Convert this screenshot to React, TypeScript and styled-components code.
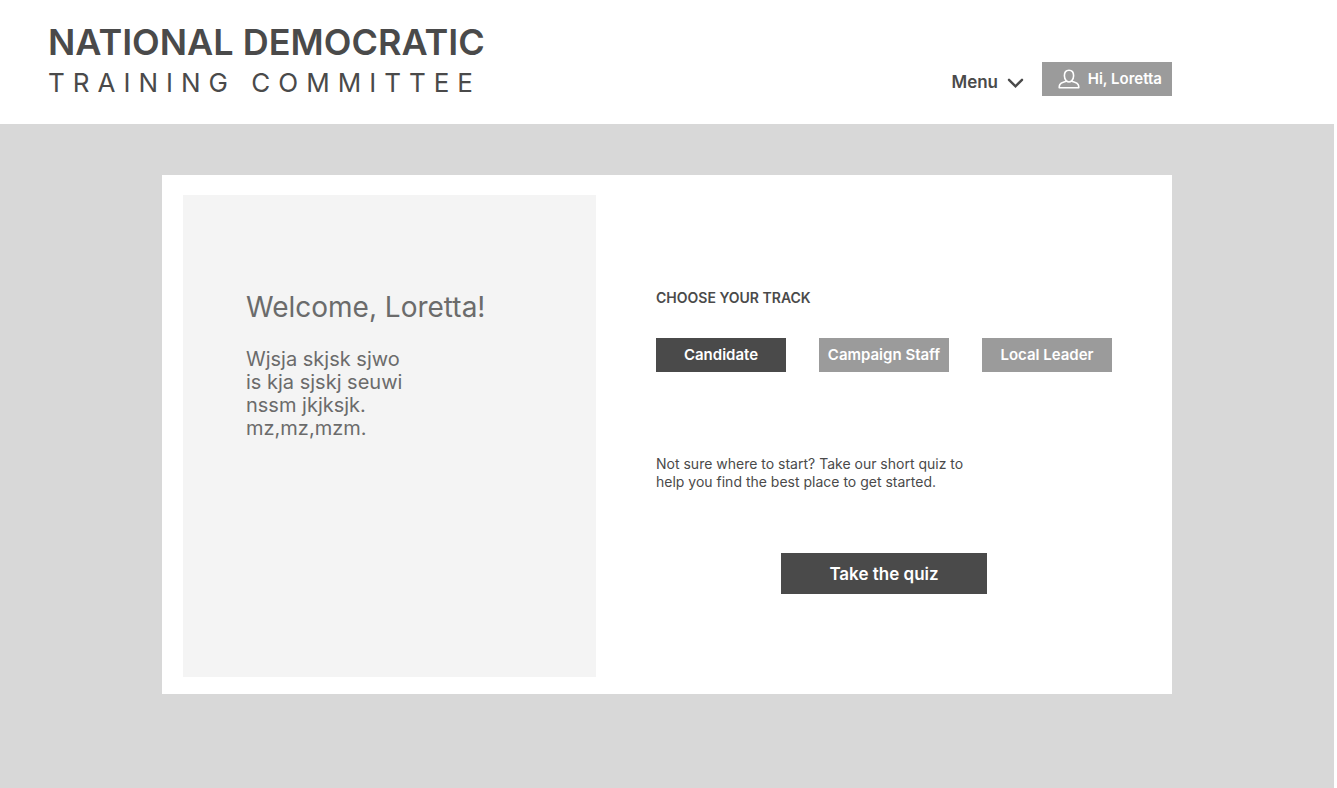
import React, { useState } from "react";
import styled, { createGlobalStyle } from "styled-components";

const GlobalStyle = createGlobalStyle`
  *, *::before, *::after { box-sizing: border-box; }
  body {
    margin: 0;
    background: #ffffff;
    color: #4a4a4a;
    font-family: Inter, Roboto, sans-serif;
  }
  h1, h2, p { margin: 0; font-weight: 400; }
  button { font-family: inherit; cursor: pointer; }
`;

const Page = styled.div`
  display: flex;
  flex-direction: column;
  min-height: 100vh;
  padding-right: 3px;
`;

const Header = styled.header`
  display: flex;
  justify-content: space-between;
  align-items: flex-start;
  min-height: 124px;
  padding: 20px max(24px, calc((100% - 1010px) / 2)) 20px 48px;
`;

const Brand = styled.a`
  color: inherit;
  text-decoration: none;
  white-space: nowrap;
`;

const BrandName = styled.span`
  display: block;
  font-size: 36px;
  line-height: 44px;
  font-weight: 600;
`;

const BrandSub = styled.span`
  display: block;
  font-size: 26px;
  line-height: 38px;
  letter-spacing: 8px;
`;

const Nav = styled.nav`
  display: flex;
  align-items: center;
  gap: 18px;
  padding-top: 42px;
`;

const MenuButton = styled.button`
  display: flex;
  align-items: center;
  gap: 8px;
  height: 34px;
  padding: 6px 0 0;
  border: 0;
  background: none;
  color: inherit;
  font-size: 17px;
  line-height: 22px;
  font-weight: 600;
`;

const FilledButton = styled.button<{ $dark?: boolean }>`
  display: flex;
  align-items: center;
  justify-content: center;
  gap: 8px;
  width: 130px;
  height: 34px;
  padding: 0;
  border: 0;
  background: ${(p) => (p.$dark ? "#4a4a4a" : "#9b9b9b")};
  color: #ffffff;
  font-size: 15px;
  line-height: 18px;
  font-weight: 600;
  white-space: nowrap;
`;

const AccountButton = styled(FilledButton)`
  justify-content: flex-end;
  padding-right: 10px;
`;

const QuizButton = styled(FilledButton)`
  align-self: center;
  width: 206px;
  height: 41px;
  font-size: 17px;
`;

const Main = styled.main`
  flex: 1;
  padding: 51px 24px;
  background: #d8d8d8;
`;

const Card = styled.section`
  display: grid;
  grid-template-columns: 413fr 456fr;
  column-gap: 60px;
  max-width: 1010px;
  min-height: 519px;
  margin: 0 auto;
  padding: 20px 60px 17px 21px;
  background: #ffffff;
`;

const Welcome = styled.div`
  padding: 92px 63px;
  background: #f4f4f4;
  color: #6b6b6b;
`;

const WelcomeTitle = styled.h1`
  font-size: 28px;
  line-height: 40px;
  white-space: nowrap;
`;

const WelcomeText = styled.p`
  margin-top: 21px;
  font-size: 20px;
  line-height: 23px;
`;

const Tracks = styled.div`
  display: flex;
  flex-direction: column;
  padding-top: 94px;
`;

const TracksTitle = styled.h2`
  font-size: 14px;
  line-height: 18px;
  font-weight: 600;
`;

const TrackList = styled.div`
  display: flex;
  justify-content: space-between;
  margin-top: 31px;
`;

const QuizText = styled.p`
  margin: 83px 0 62px;
  font-size: 14px;
  line-height: 18px;
`;

const tracks = ["Candidate", "Campaign Staff", "Local Leader"];

export default function App() {
  const [active, setActive] = useState(tracks[0]);

  return (
    <Page>
      <GlobalStyle />
      <Header>
        <Brand href="#">
          <BrandName>NATIONAL DEMOCRATIC</BrandName>
          <BrandSub>TRAINING COMMITTEE</BrandSub>
        </Brand>
        <Nav>
          <MenuButton type="button">
            Menu
            <svg width="18" height="12" viewBox="0 0 18 12" fill="none" stroke="#4a4a4a" strokeWidth="2.4" strokeLinecap="round" aria-hidden="true">
              <path d="M3 3.8 L9.5 10.3 L16 3.8" />
            </svg>
          </MenuButton>
          <AccountButton type="button">
            <svg width="22" height="20" viewBox="0 0 22 20" fill="none" stroke="#ffffff" strokeWidth="1.6" strokeLinejoin="round" aria-hidden="true">
              <path d="M8.4 12 C7 10.7 6.4 9 6.4 6.8 C6.4 3.4 8.2 1.2 11 1.2 C13.8 1.2 15.6 3.4 15.6 6.8 C15.6 9 15 10.7 13.6 12 C15.4 13.2 19 13.2 20.2 15.6 C20.7 16.6 20.8 17.6 20.8 18.8 H1.2 C1.2 17.6 1.3 16.6 1.8 15.6 C3 13.2 6.6 13.2 8.4 12 C10 13.2 12 13.2 13.6 12" />
            </svg>
            Hi, Loretta
          </AccountButton>
        </Nav>
      </Header>
      <Main>
        <Card>
          <Welcome>
            <WelcomeTitle>Welcome, Loretta!</WelcomeTitle>
            <WelcomeText>
              Wjsja skjsk sjwo
              <br />
              is kja sjskj seuwi
              <br />
              nssm jkjksjk.
              <br />
              mz,mz,mzm.
            </WelcomeText>
          </Welcome>
          <Tracks>
            <TracksTitle>CHOOSE YOUR TRACK</TracksTitle>
            <TrackList>
              {tracks.map((track) => (
                <FilledButton
                  key={track}
                  type="button"
                  $dark={track === active}
                  aria-pressed={track === active}
                  onClick={() => setActive(track)}
                >
                  {track}
                </FilledButton>
              ))}
            </TrackList>
            <QuizText>
              Not sure where to start? Take our short quiz to
              <br />
              help you find the best place to get started.
            </QuizText>
            <QuizButton type="button" $dark>
              Take the quiz
            </QuizButton>
          </Tracks>
        </Card>
      </Main>
    </Page>
  );
}
